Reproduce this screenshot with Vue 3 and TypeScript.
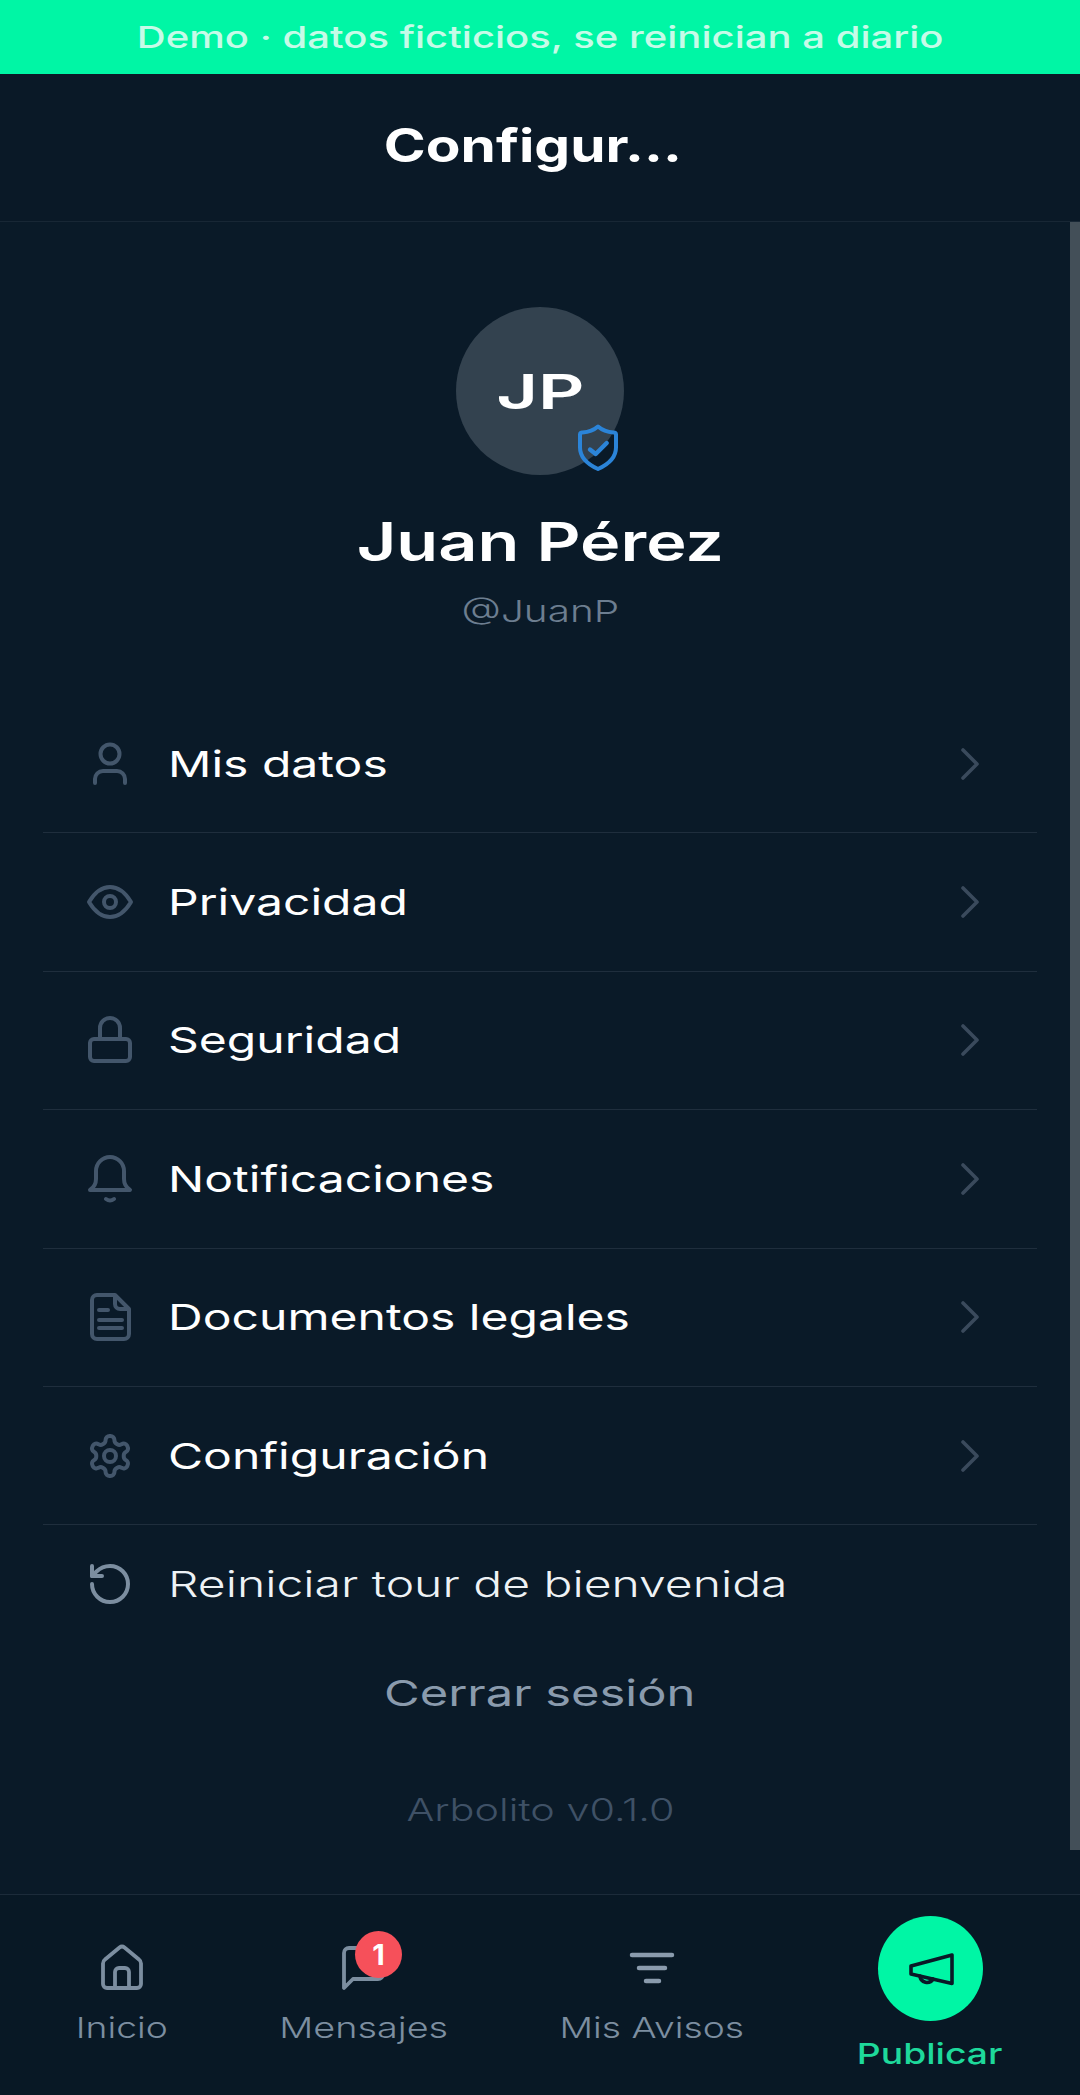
<script setup lang="ts">
interface Row { label: string; icon: string }
const rows: Row[] = [
  { label: 'Mis datos', icon: 'user' },
  { label: 'Privacidad', icon: 'eye' },
  { label: 'Seguridad', icon: 'lock' },
  { label: 'Notificaciones', icon: 'bell' },
  { label: 'Documentos legales', icon: 'doc' },
  { label: 'Configuración', icon: 'gear' },
]
</script>

<template>
  <div class="app">
    <div class="banner"><span class="banner-text">Demo · datos ficticios, se reinician a diario</span></div>
    <header class="head"><span class="title">Configur...</span></header>
    <main class="main">
      <section class="profile">
        <div class="avatar">
          <span class="initials">JP</span>
          <svg class="shield" width="40" height="48" viewBox="0 0 40 48" fill="none" stroke="#2b84d8" stroke-width="4" stroke-linejoin="round" stroke-linecap="round">
            <path d="M20 2.500c4 3.500 9 5.500 15.500 6a2 2 0 0 1 2.500 2v13c0 10-8 17-18 21.500C10 40.500 2 33.500 2 23.500v-13a2 2 0 0 1 2.500-2c6.500-.5 11.500-2.500 15.500-6z" />
            <path d="M12 25.500l5.700 4.500L28.700 19" stroke-width="4.400" />
          </svg>
        </div>
        <div class="name"><span class="name-text">Juan Pérez</span></div>
        <div class="handle"><span class="handle-text">@JuanP</span></div>
      </section>

      <ul class="list">
        <li v-for="r in rows" :key="r.label" class="row">
          <svg class="ico" width="48" height="48" viewBox="0 0 48 48" fill="none" stroke="#43566b" stroke-width="4" stroke-linecap="round" stroke-linejoin="round">
            <template v-if="r.icon === 'user'">
              <circle cx="24" cy="14" r="9.500" />
              <path d="M9 43v-4a8 8 0 0 1 8-8h14a8 8 0 0 1 8 8v4" />
            </template>
            <template v-else-if="r.icon === 'eye'">
              <path d="M3 24C9 14 16 9 24 9s15 5 21 15C39 34 32 39 24 39S9 34 3 24z" />
              <circle cx="24" cy="24" r="6" />
            </template>
            <template v-else-if="r.icon === 'lock'">
              <rect x="4" y="23" width="40" height="22" rx="4" />
              <path d="M14 23V12a10 10 0 0 1 20 0v11" />
            </template>
            <template v-else-if="r.icon === 'bell'">
              <path d="M4 35c3-2 6-6 6-11v-8a14 14 0 0 1 28 0v8c0 5 3 9 6 11z" />
              <path d="M20 44q4 3 8 0" />
            </template>
            <template v-else-if="r.icon === 'doc'">
              <path d="M11 2h18l14 14v25a5 5 0 0 1-5 5H11a5 5 0 0 1-5-5V7a5 5 0 0 1 5-5z" />
              <path d="M29 3v8a5 5 0 0 0 5 5h8" />
              <path d="M13 17h9M13 27h23M13 35h23" />
            </template>
            <template v-else>
              <path stroke-width="2" transform="scale(2)" d="M12.220 2h-.44a2 2 0 0 0-2 2v.18a2 2 0 0 1-1 1.730l-.43.25a2 2 0 0 1-2 0l-.15-.08a2 2 0 0 0-2.730.73l-.22.38a2 2 0 0 0 .73 2.730l.15.1a2 2 0 0 1 1 1.720v.51a2 2 0 0 1-1 1.740l-.15.09a2 2 0 0 0-.73 2.730l.22.38a2 2 0 0 0 2.730.73l.15-.08a2 2 0 0 1 2 0l.43.25a2 2 0 0 1 1 1.730V20a2 2 0 0 0 2 2h.44a2 2 0 0 0 2-2v-.18a2 2 0 0 1 1-1.730l.43-.25a2 2 0 0 1 2 0l.15.08a2 2 0 0 0 2.730-.73l.22-.39a2 2 0 0 0-.73-2.730l-.15-.08a2 2 0 0 1-1-1.740v-.5a2 2 0 0 1 1-1.740l.15-.09a2 2 0 0 0 .73-2.730l-.22-.38a2 2 0 0 0-2.730-.73l-.15.08a2 2 0 0 1-2 0l-.43-.25a2 2 0 0 1-1-1.730V4a2 2 0 0 0-2-2z" />
              <circle cx="24" cy="24" r="6" />
            </template>
          </svg>
          <span class="row-label">{{ r.label }}</span>
          <svg class="chev" width="20" height="32" viewBox="0 0 20 32" fill="none" stroke="#3a4a5c" stroke-width="3.600" stroke-linecap="round" stroke-linejoin="round">
            <path d="M3 2l14 14L3 30" />
          </svg>
        </li>
        <li class="row row-last">
          <svg class="ico" width="48" height="48" viewBox="0 0 24 24" fill="none" stroke="#7c8ea0" stroke-width="2" stroke-linecap="round" stroke-linejoin="round">
            <path d="M3 12a9 9 0 1 0 9-9 9.750 9.750 0 0 0-6.740 2.740L3 8" />
            <path d="M3 3v5h5" />
          </svg>
          <span class="row-label row-label-light">Reiniciar tour de bienvenida</span>
        </li>
      </ul>

      <div class="logout"><span class="logout-text">Cerrar sesión</span></div>
      <div class="version"><span class="version-text">Arbolito v0.1.0</span></div>
      <div class="scrollbar"></div>
    </main>

    <nav class="nav">
      <div class="tab">
        <svg width="48" height="48" viewBox="0 0 48 48" fill="none" stroke="#7c8ea0" stroke-width="3.800" stroke-linejoin="round" stroke-linecap="round">
          <path d="M21.500 4.500a4 4 0 0 1 5 0L41 16.500a5 5 0 0 1 2 4V41a4 4 0 0 1-4 4H9a4 4 0 0 1-4-4V20.500a5 5 0 0 1 2-4z" />
          <path d="M17 45V29a4 4 0 0 1 4-4h6a4 4 0 0 1 4 4v16" />
        </svg>
        <span class="tab-label l-inicio">Inicio</span>
      </div>
      <div class="tab">
        <div class="msg">
          <svg width="48" height="48" viewBox="0 0 48 48" fill="none" stroke="#7c8ea0" stroke-width="3.800" stroke-linejoin="round" stroke-linecap="round">
            <path d="M4 45V10a5 5 0 0 1 5-5h29a5 5 0 0 1 5 5v21a5 5 0 0 1-5 5H13z" />
          </svg>
          <span class="badge">1</span>
        </div>
        <span class="tab-label l-msg">Mensajes</span>
      </div>
      <div class="tab">
        <svg width="48" height="48" viewBox="0 0 48 48" fill="none" stroke="#8a9bad" stroke-width="4.500" stroke-linecap="round">
          <path d="M4 12h40M11 25h26M18 38h13" />
        </svg>
        <span class="tab-label l-avisos">Mis Avisos</span>
      </div>
      <div class="tab tab-pub">
        <div class="fab">
          <svg width="48" height="48" viewBox="0 0 48 48" fill="none" stroke="#0a1927" stroke-width="3.600" stroke-linejoin="round" stroke-linecap="round">
            <path d="M46 10v28.500L5 29v-8z" />
            <path d="M14 31a7 7 0 0 0 13 3" />
          </svg>
        </div>
        <span class="tab-label l-pub">Publicar</span>
      </div>
    </nav>
  </div>
</template>

<style>
html, body { margin: 0; background: #0a1927; }
</style>

<style scoped>
.app {
  width: 1080px;
  height: 2095px;
  display: flex;
  flex-direction: column;
  background: #0a1927;
  font-family: Inter, "Liberation Sans", sans-serif;
  color: #fff;
  overflow: hidden;
}
span { display: inline-block; white-space: nowrap; }

.banner {
  height: 74px;
  flex: none;
  background: #00f6a5;
  display: flex;
  align-items: center;
  justify-content: center;
}
.banner-text { font-size: 30px; font-weight: 500; color: #c6fbe8; transform: scaleX(1.335); }

.head {
  height: 148px;
  flex: none;
  box-sizing: border-box;
  border-bottom: 1px solid #182735;
  padding: 0 14px 6px 0;
  display: flex;
  align-items: center;
  justify-content: center;
}
.title { font-size: 46px; font-weight: 700; transform: scaleX(1.233); }

.main {
  position: relative;
  flex: 1;
  min-height: 0;
  background: #0a1a28;
}
.scrollbar {
  position: absolute;
  top: 0;
  right: 0;
  width: 10px;
  height: 1628px;
  background: #434f58;
}

.profile {
  padding-top: 85px;
  display: flex;
  flex-direction: column;
  align-items: center;
}
.avatar {
  position: relative;
  width: 168px;
  height: 168px;
  border-radius: 50%;
  background: #33424f;
  display: flex;
  align-items: center;
  justify-content: center;
}
.initials { font-size: 48px; font-weight: 600; transform: scaleX(1.5); }
.shield { position: absolute; left: 122px; top: 117px; }
.name { margin-top: 32px; line-height: 70px; height: 70px; }
.name-text { font-size: 53px; font-weight: 600; transform: scaleX(1.29); }
.handle { margin-top: 14px; line-height: 40px; height: 40px; }
.handle-text { font-size: 30px; font-weight: 300; color: #6d7e90; transform: scaleX(1.35); }

.list {
  list-style: none;
  margin: 64px 43px 0;
  padding: 0;
}
.row {
  height: 138.400px;
  box-sizing: border-box;
  border-bottom: 1px solid #1f2e3d;
  display: flex;
  align-items: center;
  padding: 0 57px 0 43px;
}
.row-last { height: 118px; border-bottom: 0; }
.ico { flex: none; }
.row-label {
  margin-left: 34px;
  font-size: 36px;
  font-weight: 420;
  color: #fff;
  transform: scaleX(1.335);
  transform-origin: left center;
}
.row-label-light { font-weight: 350; color: #eef2f5; }
.chev { flex: none; margin-left: auto; }

.logout { height: 100px; display: flex; align-items: center; justify-content: center; }
.logout-text { font-size: 36px; font-weight: 420; color: #8a9bad; transform: scaleX(1.357); }
.version { margin-top: 46px; height: 40px; display: flex; align-items: center; justify-content: center; }
.version-text { font-size: 31px; font-weight: 300; color: #3f5166; transform: scaleX(1.334); }

.nav {
  height: 201px;
  flex: none;
  box-sizing: border-box;
  border-top: 1px solid #1c2b3a;
  background: #081825;
  display: grid;
  grid-template-columns: 244px 240px 336px 220px;
}
.tab {
  display: flex;
  flex-direction: column;
  align-items: center;
  padding-top: 48px;
}
.tab-pub { padding-top: 21px; }
.tab-label {
  margin-top: 19px;
  font-size: 29px;
  font-weight: 300;
  color: #7c8ea0;
  transform: scaleX(1.285);
}
.l-msg { transform: scaleX(1.304); }
.l-pub { margin-top: 15px; font-weight: 450; color: #1ed99b; }
.msg { position: relative; width: 48px; height: 48px; }
.badge {
  position: absolute;
  left: 15px;
  top: -12px;
  width: 47px;
  height: 47px;
  border-radius: 50%;
  background: #f6505a;
  color: #fff;
  font-size: 29px;
  font-weight: 700;
  line-height: 47px;
  text-align: center;
}
.fab {
  width: 105px;
  height: 105px;
  border-radius: 50%;
  background: #00f6a5;
  display: flex;
  align-items: center;
  justify-content: center;
}
</style>
